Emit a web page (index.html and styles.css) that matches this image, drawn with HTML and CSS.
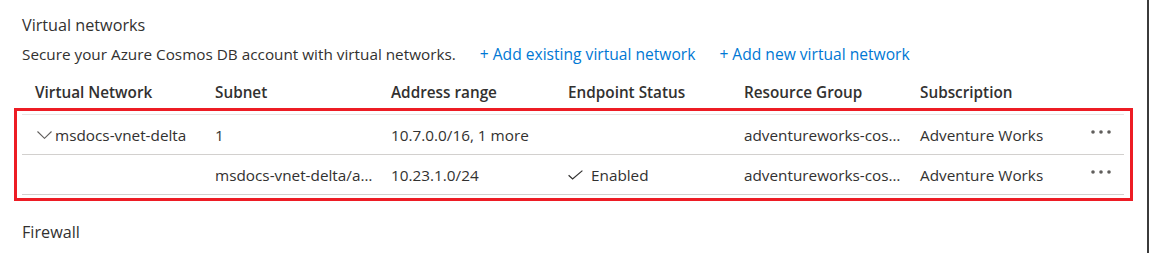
FILE: index.html
```html
<!DOCTYPE html>
<html lang="en">
<head>
    <meta charset="UTF-8">
    <meta name="viewport" content="width=device-width, initial-scale=1.0">
    <title>Networking</title>
    <link rel="stylesheet" href="styles.css">
</head>
<body>
    <div class="blade">
        <section class="vnet">
            <h2 class="section-title">Virtual networks</h2>
            <div class="section-desc">
                <span>Secure your Azure Cosmos DB account with virtual networks.</span>
                <a href="#" class="cmd">+ Add existing virtual network</a>
                <a href="#" class="cmd">+ Add new virtual network</a>
            </div>

            <div class="grid">
                <div class="grid-row grid-head">
                    <div class="cell">Virtual Network</div>
                    <div class="cell">Subnet</div>
                    <div class="cell">Address range</div>
                    <div class="cell">Endpoint Status</div>
                    <div class="cell">Resource Group</div>
                    <div class="cell">Subscription</div>
                    <div class="cell"></div>
                </div>

                <div class="grid-body">
                    <div class="grid-row">
                        <div class="cell cell-icon">
                            <svg class="chevron" width="15" height="8" viewBox="0 0 15 8">
                                <polyline points="0.5,0.5 7.5,7.3 14.5,0.5" fill="none" stroke="#605e5c" stroke-width="1.1"/>
                            </svg>
                            <span>msdocs-vnet-delta</span>
                        </div>
                        <div class="cell">1</div>
                        <div class="cell">10.7.0.0/16, 1 more</div>
                        <div class="cell"></div>
                        <div class="cell">adventureworks-cos…</div>
                        <div class="cell">Adventure Works</div>
                        <div class="cell cell-more">
                            <svg class="more" width="20" height="4" viewBox="0 0 20 4">
                                <circle cx="2" cy="2" r="1.8"/>
                                <circle cx="10" cy="2" r="1.8"/>
                                <circle cx="18" cy="2" r="1.8"/>
                            </svg>
                        </div>
                    </div>
                    <div class="grid-row">
                        <div class="cell"></div>
                        <div class="cell">msdocs-vnet-delta/a…</div>
                        <div class="cell">10.23.1.0/24</div>
                        <div class="cell cell-icon">
                            <svg class="check" width="15" height="10" viewBox="0 0 15 10">
                                <polyline points="0.6,5.2 4.6,9 14.4,0.6" fill="none" stroke="#323130" stroke-width="1.2"/>
                            </svg>
                            <span>Enabled</span>
                        </div>
                        <div class="cell">adventureworks-cos…</div>
                        <div class="cell">Adventure Works</div>
                        <div class="cell cell-more">
                            <svg class="more" width="20" height="4" viewBox="0 0 20 4">
                                <circle cx="2" cy="2" r="1.8"/>
                                <circle cx="10" cy="2" r="1.8"/>
                                <circle cx="18" cy="2" r="1.8"/>
                            </svg>
                        </div>
                    </div>
                </div>
            </div>
        </section>

        <section class="firewall">
            <h2 class="section-title">Firewall</h2>
        </section>
    </div>
</body>
</html>
```
FILE: styles.css
```css
body {
    margin: 0;
    background: #fff;
    color: #323130;
    font-family: "Open Sans", "Segoe UI", sans-serif;
    font-size: 15.3px;
}
.blade {
    box-sizing: border-box;
    height: 100vh;
    padding: 14px 0 0 22px;
    border-right: 2px solid #3b3b3b;
}
.section-title {
    margin: 0;
    font-size: 16.2px;
    font-weight: 400;
    line-height: 22px;
}
.section-desc {
    display: flex;
    gap: 24px;
    margin-top: 7px;
    line-height: 22px;
}
.cmd {
    color: #0078d4;
    text-decoration: none;
    font-size: 15.6px;
}

/* grid */
.grid {
    width: 1102px;
    margin-top: 8px;
}
.grid-row {
    display: grid;
    grid-template-columns: 180px 176px 177px 176px 176px 176px 1fr;
}
.grid-head {
    padding-top: 4px;
    line-height: 31px;
    font-weight: 600;
}
.cell {
    padding: 0 2px 0 13px;
    white-space: nowrap;
}
.grid-body {
    margin: 0 -9px 0 -8px;
    padding: 3px 6px 3px 5px;
    border: 3px solid #ed1c24;
}
.grid-body .grid-row {
    min-height: 39px;
    align-items: center;
    line-height: 20px;
    border-bottom: 1px solid #d2d0ce;
}
.grid-body .grid-row:first-child {
    border-top: 1px solid #e8e6e4;
}
.cell-icon {
    display: flex;
    align-items: center;
}
.chevron {
    margin: 0 3px 0 2px;
}
.check {
    margin: 0 8px 0 0;
}
.cell-more {
    display: flex;
    padding-left: 8px;
}
.more {
    fill: #605e5c;
    margin-bottom: 5px;
}

.firewall {
    margin-top: 20px;
}
```
